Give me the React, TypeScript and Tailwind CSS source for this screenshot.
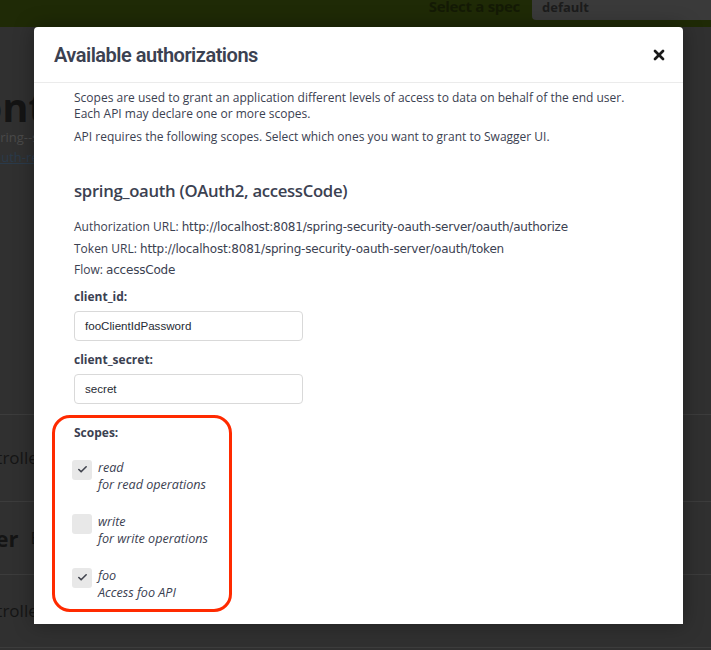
import { X, Check } from 'lucide-react';

const scopes = [
  { name: 'read', desc: 'for read operations', checked: true },
  { name: 'write', desc: 'for write operations', checked: false },
  { name: 'foo', desc: 'Access foo API', checked: true },
];

const Field = ({ label, value }: { label: string; value: string }) => (
  <div className="mb-[11px]">
    <label className="block text-[12px] font-bold text-[#3b4151] leading-[16px] mb-[6px]">{label}</label>
    <div className="w-[229px] h-[30px] border border-[#d9d9d9] rounded-[4px] pl-[10px] flex items-center text-[11.6px] text-[#262a33] font-['Liberation_Sans',sans-serif]">
      {value}
    </div>
  </div>
);

export default function App() {
  return (
    <div className="relative w-[711px] h-[650px] overflow-hidden bg-[#303030] font-['Open_Sans',sans-serif]">
      {/* page behind the modal */}
      <div className="h-[27px] bg-[#1f2a06] flex items-start justify-end">
        <span className="text-[15px] font-bold text-[#141a05] leading-[20px] mr-[12px] mt-[-4px] tracking-[-0.3px]">Select a spec</span>
        <div className="w-[179px] h-[20px] bg-[#3a3a3a] rounded-bl-[4px] text-[13px] font-bold text-[#1c1c1c] pl-[10px] leading-[14px]">default</div>
      </div>
      <div className="pt-[66px]">
        <div className="ml-[-48px] text-[40px] font-bold leading-[28px] text-[#141414]">Content</div>
        <div className="ml-[-14px] mt-[6px] text-[13px] text-[#4a4a4a] leading-[20px]">spring--security</div>
        <div className="ml-[-6px] text-[13px] text-[#2a3a4a] underline leading-[20px]">auth-resource</div>
      </div>
      <div className="mt-[247px] border-t border-[#3c3c3c] h-[87px] flex items-center">
        <span className="ml-[-35px] text-[17px] text-[#151515]">Controller</span>
      </div>
      <div className="border-t border-[#3c3c3c] h-[73px] flex items-center gap-[12px]">
        <span className="ml-[-30px] text-[22px] font-bold text-[#141414]">user</span>
        <span className="text-[17px] text-[#151515]">Basic</span>
      </div>
      <div className="border-t border-[#3c3c3c] h-[73px] flex items-center">
        <span className="ml-[-35px] text-[17px] text-[#151515]">Controller</span>
      </div>
      <div className="border-t border-[#3c3c3c]" />

      {/* modal */}
      <div className="absolute left-[34px] top-[27px] w-[649px] h-[597px] bg-white rounded-t-[4px] shadow-[0_0_20px_rgba(0,0,0,0.35)]">
        <div className="h-[56px] border-b border-[#ebebeb] flex items-center justify-between pl-[20px] pr-[16px]">
          <h3 className="text-[20px] font-semibold tracking-[-0.5px] text-[#3b4151] font-['Roboto',sans-serif] mt-[1px]">Available authorizations</h3>
          <X size={16} strokeWidth={4} className="text-[#1a1a1a]" />
        </div>
        <div className="pl-[40px] pt-[7px] text-[#3b4151]">
          <p className="text-[12px] leading-[16px]">
            Scopes are used to grant an application different levels of access to data on behalf of the end user.
            <br />
            Each API may declare one or more scopes.
          </p>
          <p className="text-[12px] leading-[16px] mt-[7px]">API requires the following scopes. Select which ones you want to grant to Swagger UI.</p>
          <h4 className="mt-[34px] text-[16.7px] font-semibold tracking-[-0.3px] leading-[24px]">spring_oauth (OAuth2, accessCode)</h4>
          <div className="mt-[13px] text-[12px]">
            <p className="h-[21.5px] leading-[21.5px]">Authorization URL: <code className="font-['DejaVu_Sans',sans-serif] text-[12px] leading-none tracking-[-0.2px]">http://localhost:8081/spring-security-oauth-server/oauth/authorize</code></p>
            <p className="h-[21.5px] leading-[21.5px]">Token URL: <code className="font-['DejaVu_Sans',sans-serif] text-[12px] leading-none tracking-[-0.2px]">http://localhost:8081/spring-security-oauth-server/oauth/token</code></p>
            <p className="h-[21.5px] leading-[21.5px]">Flow: <code className="font-['DejaVu_Sans',sans-serif] text-[12px] leading-none tracking-[-0.2px]">accessCode</code></p>
          </div>
          <div className="mt-[8px]">
            <Field label="client_id:" value="fooClientIdPassword" />
            <Field label="client_secret:" value="secret" />
          </div>
        </div>
        <div className="ml-[18px] w-[180px] h-[197px] border-[3px] border-[#ff2a00] rounded-[18px] pl-[19px] pt-[7px]">
          <div className="text-[12px] font-bold text-[#3b4151] leading-[16px]">Scopes:</div>
          <div className="mt-[18px] flex flex-col gap-[20px]">
            {scopes.map((s) => (
              <div key={s.name} className="flex items-start gap-[6px] ml-[-2px]">
                <div className="w-[20px] h-[20px] rounded-[3px] bg-[#e8e8e8] flex items-center justify-center mt-[1px] shrink-0">
                  {s.checked && <Check size={11} strokeWidth={3.5} className="text-[#41444e]" />}
                </div>
                <div className="italic text-[12.6px] text-[#3b4151] leading-[17px]">
                  <div>{s.name}</div>
                  <div>{s.desc}</div>
                </div>
              </div>
            ))}
          </div>
        </div>
      </div>
    </div>
  );
}
